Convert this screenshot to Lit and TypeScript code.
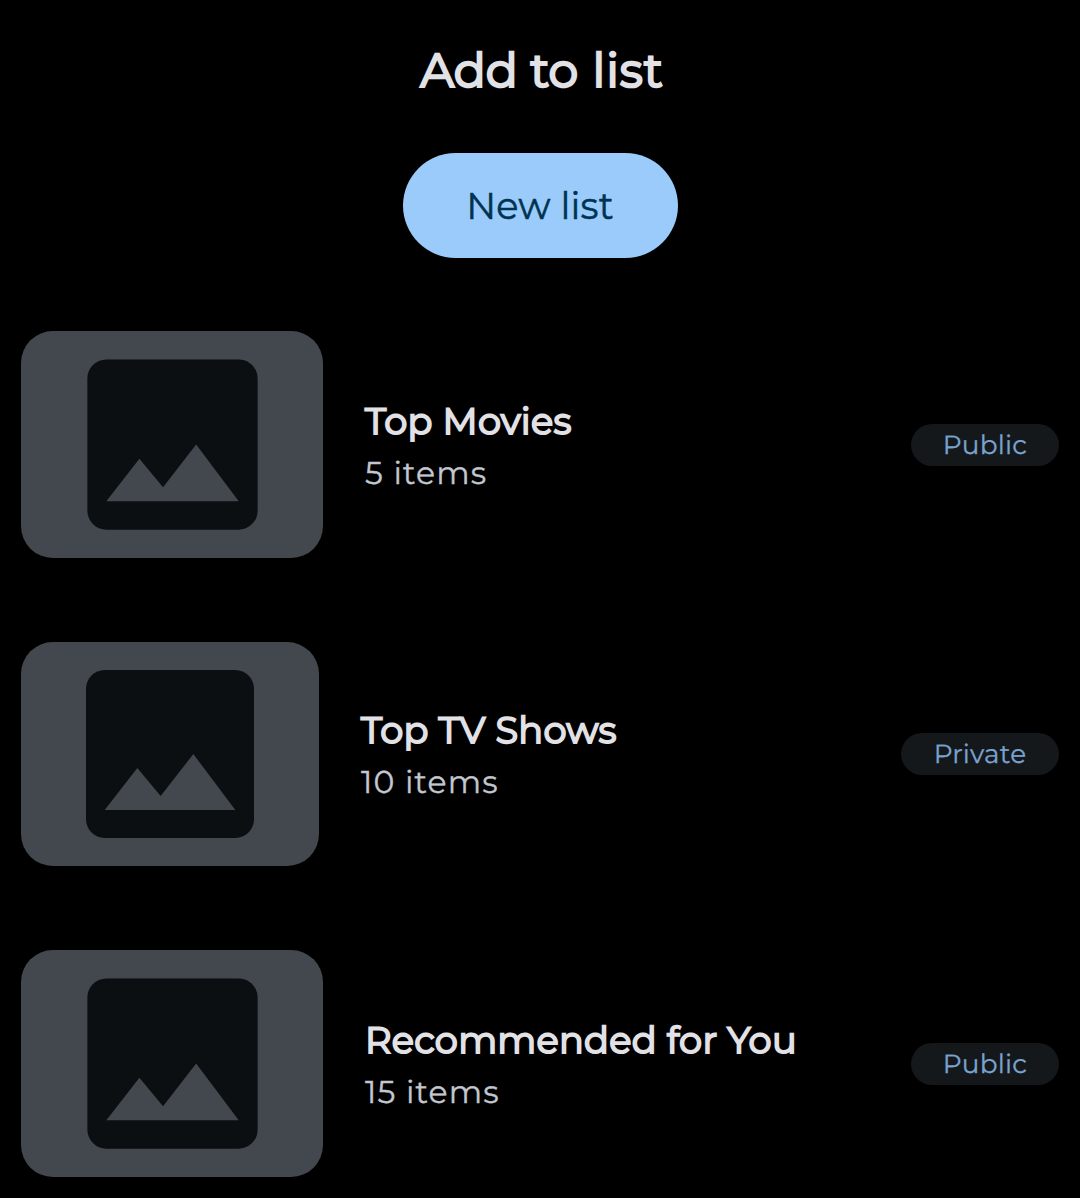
import { LitElement, html, css } from "lit";
import { customElement, property } from "lit/decorators.js";

interface MediaList { name: string; items: string; visibility: string; size: string; }

const LISTS: MediaList[] = [
  { name: "Top Movies", items: "5 items", visibility: "Public", size: "large" },
  { name: "Top TV Shows", items: "10 items", visibility: "Private", size: "small" },
  { name: "Recommended for You", items: "15 items", visibility: "Public", size: "large" },
];

@customElement("list-row")
class ListRow extends LitElement {
  @property({ attribute: false }) list!: MediaList;
  static styles = css`
    :host { display: block; }
    .row { display: flex; align-items: center; padding: 0 21px; }
    .thumb { flex: none; border-radius: 32px; background: #43474e; display: flex; align-items: center; justify-content: center; }
    .thumb.large { width: 302px; height: 227px; }
    .thumb.small { width: 298px; height: 224px; }
    .large svg { width: 227px; height: 227px; }
    .small svg { width: 224px; height: 224px; }
    svg { display: block; }
    .text { flex: 1; margin-left: 42px; white-space: nowrap; display: flex; flex-direction: column; gap: 3px; }
    .small + .text { margin-top: -1px; }
    .name { font-size: 36.75px; line-height: 54px; letter-spacing: 0.24px; color: #e2e2e6; -webkit-text-stroke: 1.8px #e2e2e6; }
    .count { font-size: 31.5px; line-height: 42px; letter-spacing: 1.15px; color: #c3c7cf; -webkit-text-stroke: 0.35px #c3c7cf; }
    .badge { flex: none; box-sizing: border-box; height: 42px; border-radius: 21px; background: #14181b;
      font-size: 26.25px; line-height: 42px; letter-spacing: 0.26px; color: #7ba3d0; -webkit-text-stroke: 0.3px #7ba3d0; text-align: center; white-space: nowrap; }
    .public { width: 148px; }
    .private { width: 158px; }
  `;
  render() {
    const l = this.list;
    return html`<div class="row">
      <div class="thumb ${l.size}"><svg viewBox="0 0 24 24">
        <path fill="#0b0f12" d="M21 19V5c0-1.1-.9-2-2-2H5c-1.1 0-2 .9-2 2v14c0 1.1.9 2 2 2h14c1.1 0 2-.9 2-2z"/>
        <path fill="#43474e" d="M8.5 13.5l2.5 3.01L14.5 12l4.5 6H5z"/></svg></div>
      <div class="text"><span class="name">${l.name}</span><span class="count">${l.items}</span></div>
      <div class="badge ${l.visibility.toLowerCase()}">${l.visibility}</div>
    </div>`;
  }
}

@customElement("app-root")
class AppRoot extends LitElement {
  static styles = css`
    :host { display: block; height: 1198px; background: #000; overflow: hidden; text-rendering: geometricPrecision;
      font-family: Montserrat, "Open Sans", sans-serif; font-weight: 400; }
    header { display: flex; flex-direction: column; align-items: center; padding-top: 38px; }
    .title { margin: 0; padding-left: 4px; height: 64px; line-height: 64px; font-size: 47.25px; font-weight: 400; color: #e2e2e6; -webkit-text-stroke: 2.2px #e2e2e6; }
    .wide { letter-spacing: 0.9px; margin-left: 2px; }
    .button { width: 275px; height: 105px; margin-top: 51px; padding: 0; border: 0; border-radius: 53px; background: #9bcbfb;
      font: inherit; font-size: 36.75px; letter-spacing: 0.15px; color: #003351; -webkit-text-stroke: 0.5px #003351; }
    main { display: flex; flex-direction: column; gap: 84px; margin-top: 73px; }
  `;
  render() {
    return html`<header><h1 class="title">Add to <span class="wide">list</span></h1>
      <button class="button">New list</button></header>
      <main>${LISTS.map((l) => html`<list-row .list=${l}></list-row>`)}</main>`;
  }
}
